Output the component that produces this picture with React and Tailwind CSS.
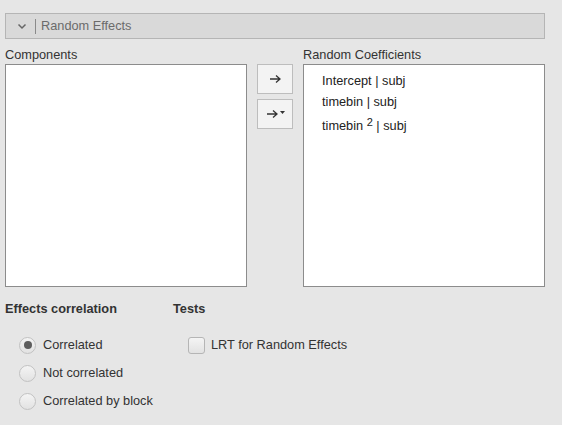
import React from "react";

function Radio({ label, checked }) {
  return (
    <div className="flex items-center h-[28px]">
      <div className="w-[17px] h-[17px] rounded-full border border-[#c2c2c2] bg-gradient-to-b from-[#f4f4f4] to-[#e2e2e2] flex items-center justify-center">
        {checked && <div className="w-[8px] h-[8px] rounded-full bg-[#5e5e5e]" />}
      </div>
      <span className="ml-[7px]">{label}</span>
    </div>
  );
}

function ArrowIcon() {
  return (
    <svg width="13" height="10" viewBox="0 0 13 10">
      <path d="M1 5h10M7 1.5L11 5 7 8.5" fill="none" stroke="#333" strokeWidth="1.3" />
    </svg>
  );
}

export default function App() {
  return (
    <div className="w-[562px] h-[425px] bg-[#e6e6e6] text-[12.75px] text-[#333] overflow-hidden font-['Liberation_Sans',Arial,sans-serif]">
      <div className="pt-[13px] px-[5px]">
        {/* Section header */}
        <div className="w-[540px] h-[26px] bg-[#d9d9d9] border border-[#b5b5b5] flex items-center">
          <svg width="10" height="7" viewBox="0 0 10 7" className="ml-[11px]">
            <path d="M1.5 1.5L5 5l3.5-3.5" fill="none" stroke="#666" strokeWidth="1.5" />
          </svg>
          <div className="w-px h-[15px] bg-[#8a8a8a] ml-[8px]" />
          <span className="ml-[5px] text-[#6b6b6b]">Random Effects</span>
        </div>

        {/* Variable lists */}
        <div className="flex mt-[7px]">
          <div className="flex flex-col w-[242px]">
            <div className="h-[18px] leading-[18px]">Components</div>
            <div className="h-[223px] bg-white border border-[#8c8c8c]" />
          </div>
          <div className="flex flex-col ml-[10px] pt-[18px] gap-[5px]">
            <div className="w-[36px] h-[30px] border border-[#bdbdbd] bg-[#f3f3f3] flex items-center justify-center">
              <ArrowIcon />
            </div>
            <div className="w-[36px] h-[30px] border border-[#bdbdbd] bg-[#f3f3f3] flex items-center justify-center pl-[2px]">
              <ArrowIcon />
              <svg width="6" height="4" viewBox="0 0 6 4" className="ml-[1px] mb-[3px]">
                <path d="M0 0h5L2.5 3z" fill="#333" />
              </svg>
            </div>
          </div>
          <div className="flex flex-col w-[242px] ml-[10px]">
            <div className="h-[18px] leading-[18px]">Random Coefficients</div>
            <div className="h-[223px] bg-white border border-[#8c8c8c] pl-[18px] pt-[5px] text-[#222]">
              <div className="h-[21px] leading-[21px]">Intercept | subj</div>
              <div className="h-[21px] leading-[21px]">timebin | subj</div>
              <div className="h-[26px] leading-[28px] flex items-start">
                <span>timebin&nbsp;</span>
                <span className="text-[11px] leading-[20px]">2</span>
                <span>&nbsp;| subj</span>
              </div>
            </div>
          </div>
        </div>

        {/* Options */}
        <div className="flex mt-[14px]">
          <div className="w-[168px]">
            <div className="font-bold h-[16px] leading-[16px]">Effects correlation</div>
            <div className="pl-[14px] mt-[14px]">
              <Radio label="Correlated" checked />
              <Radio label="Not correlated" />
              <Radio label="Correlated by block" />
            </div>
          </div>
          <div>
            <div className="font-bold h-[16px] leading-[16px]">Tests</div>
            <div className="pl-[15px] mt-[14px]">
              <div className="flex items-center h-[28px]">
                <div className="w-[17px] h-[17px] rounded-[3px] border border-[#b5b5b5] bg-gradient-to-b from-[#f4f4f4] to-[#e2e2e2]" />
                <span className="ml-[6px]">LRT for Random Effects</span>
              </div>
            </div>
          </div>
        </div>
      </div>
    </div>
  );
}
